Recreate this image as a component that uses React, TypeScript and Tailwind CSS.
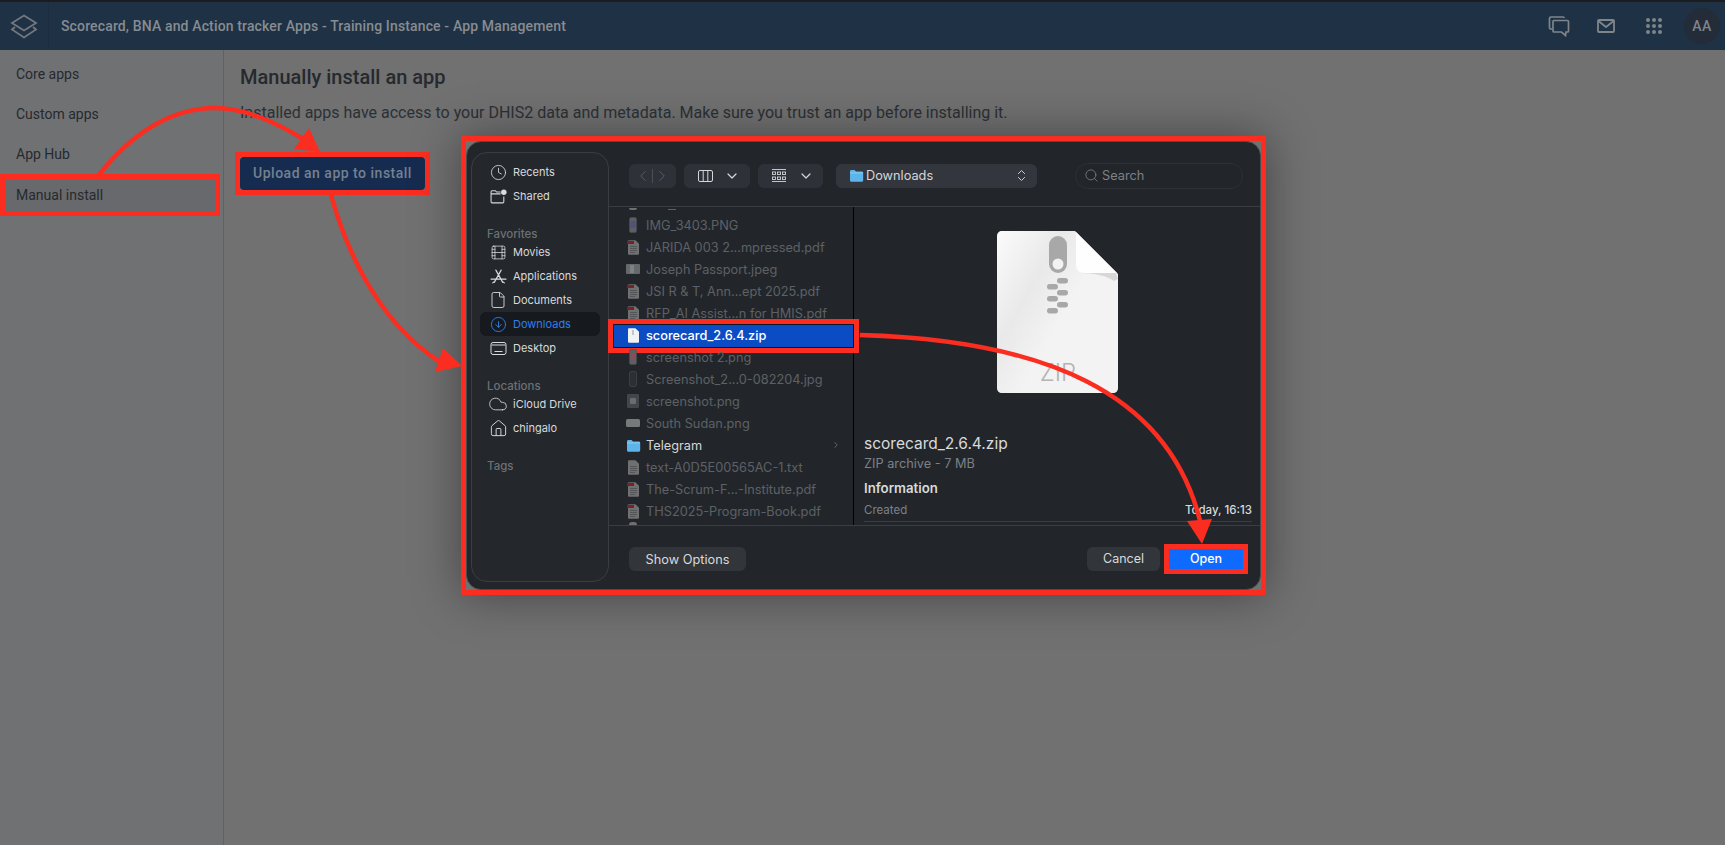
import { ChevronDown, ChevronLeft, ChevronRight, ChevronsUpDown, Cloud, Clock, File, Film, CircleArrowDown, House, Search } from "lucide-react";

type FileKind = "pdf" | "phone" | "phonePink" | "phoneDark" | "passport" | "square" | "wide" | "folder" | "txt" | "zip";

const files: { name: string; kind: FileKind; selected?: boolean; active?: boolean }[] = [
  { name: "IMG_3403.PNG", kind: "phone" },
  { name: "JARIDA 003 2...mpressed.pdf", kind: "pdf" },
  { name: "Joseph Passport.jpeg", kind: "passport" },
  { name: "JSI R & T, Ann...ept 2025.pdf", kind: "pdf" },
  { name: "RFP_AI Assist...n for HMIS.pdf", kind: "pdf" },
  { name: "scorecard_2.6.4.zip", kind: "zip", selected: true },
  { name: "screenshot 2.png", kind: "phonePink" },
  { name: "Screenshot_2...0-082204.jpg", kind: "phoneDark" },
  { name: "screenshot.png", kind: "square" },
  { name: "South Sudan.png", kind: "wide" },
  { name: "Telegram", kind: "folder", active: true },
  { name: "text-A0D5E00565AC-1.txt", kind: "txt" },
  { name: "The-Scrum-F...-Institute.pdf", kind: "pdf" },
  { name: "THS2025-Program-Book.pdf", kind: "pdf" },
];

function FileGlyph({ kind }: { kind: FileKind }) {
  if (kind === "folder") {
    return (
      <svg width="15" height="13" viewBox="0 0 15 13">
        <path d="M1 2.500C1 1.500 1.600 1 2.400 1h3.200l1.400 1.500h5.600c1 0 1.600.6 1.600 1.500v7.200c0 .9-.6 1.500-1.600 1.500H2.400c-.8 0-1.400-.6-1.400-1.500z" fill="#5db4ea" />
        <rect x="1" y="3.400" width="13" height="1" fill="#8ad0f5" />
      </svg>
    );
  }
  if (kind === "phone" || kind === "phonePink" || kind === "phoneDark") {
    const body = kind === "phoneDark" ? "#2c2f33" : "#5d5f63";
    const mid = kind === "phone" ? "#54507a" : kind === "phonePink" ? "#8a4d5c" : "#2c2f33";
    return (
      <svg width="8" height="16" viewBox="0 0 8 16">
        <rect x="0.5" y="0.5" width="7" height="15" rx="1.5" fill={body} stroke="#4a4d51" strokeWidth="0.6" />
        <rect x="1.5" y="4" width="5" height="7" fill={mid} />
      </svg>
    );
  }
  if (kind === "passport") {
    return (
      <svg width="14" height="10" viewBox="0 0 14 10">
        <rect width="14" height="10" rx="1" fill="#66696b" />
        <rect x="4" y="1" width="4" height="8" fill="#7d8180" />
      </svg>
    );
  }
  if (kind === "square") {
    return (
      <svg width="12" height="14" viewBox="0 0 12 14">
        <rect width="12" height="14" rx="1" fill="#43464a" />
        <rect x="3" y="4" width="6" height="6" rx="1" fill="#6a6d70" />
      </svg>
    );
  }
  if (kind === "wide") {
    return (
      <svg width="14" height="8" viewBox="0 0 14 8">
        <rect width="14" height="8" rx="1.5" fill="#77797b" />
      </svg>
    );
  }
  const page = kind === "zip" ? "#f1f2f3" : "#6f7072";
  return (
    <svg width="13" height="15" viewBox="0 0 13 15">
      <path d="M1 1.200C1 .6 1.400.2 2 .2h6.400L12 3.800V14c0 .5-.4.8-1 .8H2c-.6 0-1-.3-1-.8z" fill={page} />
      {kind === "zip" && <rect x="5.5" y="2" width="1" height="5" fill="#9a9a9a" />}
      {(kind === "pdf" || kind === "txt") && (
        <path d="M3 6.500h7M3 8.500h7M3 10.500h7M3 12.500h5" stroke="#4d4e50" strokeWidth="0.8" />
      )}
      {kind === "pdf" && <rect x="0" y="1" width="7" height="3" fill="#742326" />}
    </svg>
  );
}

function SharedIcon() {
  return (
    <svg width="17" height="15" viewBox="0 0 16 14" fill="none" stroke="#d8dadc" strokeWidth="1">
      <path d="M1 12V2.500C1 1.900 1.400 1.500 2 1.500h3l1.200 1.300H10M1 4.500h9M1 12c0 .6.4 1 1 1h10c.6 0 1-.4 1-1V7" />
      <circle cx="13" cy="3" r="2.600" fill="#d8dadc" stroke="none" />
    </svg>
  );
}

function ApplicationsIcon() {
  return (
    <svg width="17" height="17" viewBox="0 0 16 16" fill="none" stroke="#d8dadc" strokeWidth="1.1" strokeLinecap="round">
      <path d="M5.500 2 12 13.500M10.500 2 4 13.500M1 10.500h14M2.500 14l1.500-1M13.500 14 12 13" />
    </svg>
  );
}

function DesktopIcon() {
  return (
    <svg width="17" height="13" viewBox="0 0 16 13" fill="none" stroke="#d8dadc" strokeWidth="1">
      <rect x="0.5" y="0.5" width="15" height="12" rx="2" />
      <path d="M1 3h14M4 9.500h8" />
    </svg>
  );
}

function PlaceRow({ icon, label, active }: { icon: React.ReactNode; label: string; active?: boolean }) {
  return (
    <div className={active ? "mx-2 flex h-6 items-center gap-1 rounded-md bg-[#16191d] px-[7px] text-[#2d7ff0]" : "mx-2 flex h-6 items-center gap-1 px-[7px] text-[#d8dadc]"}>
      <span className="flex w-[22px] justify-center">{icon}</span>
      <span className="font-['Inter',sans-serif] text-[11px]">{label}</span>
    </div>
  );
}

function PlaceLabel({ text }: { text: string }) {
  return <div className="mt-4 h-4 pl-[15px] pt-[2px] font-['Inter',sans-serif] text-[11.5px] font-medium leading-4 text-[#6c7075]">{text}</div>;
}

function FileRow({ file }: { file: (typeof files)[number] }) {
  const color = file.selected ? "text-white" : file.active ? "text-[#d4d6d8]" : "text-[#5d6165]";
  return (
    <div className="relative flex h-[22px] items-center">
      {file.selected && (
        <div className="absolute -left-px -top-[5px] h-[34px] w-[251px] border-[5px] border-[#fb2d20] bg-[#0b4cc4] shadow-[inset_0_0_0_1px_#0c1526]" />
      )}
      <span className="relative flex w-[32px] justify-end">
        <span className="flex w-[16px] justify-center">
          <FileGlyph kind={file.kind} />
        </span>
      </span>
      <span className={`relative ml-[5px] whitespace-nowrap pt-px font-['Inter',sans-serif] text-[12.75px] ${file.selected ? "font-medium" : ""} ${color}`}>{file.name}</span>
      {file.active && <ChevronRight className="absolute left-[222px] text-[#6c7075]" size={10} />}
    </div>
  );
}

function ZipPreview() {
  return (
    <svg width="121" height="162" viewBox="0 0 121 162">
      <defs>
        <linearGradient id="page" x1="0" y1="0" x2="1" y2="0.75">
          <stop offset="0" stopColor="#fbfbfb" />
          <stop offset="0.35" stopColor="#e9e9e9" />
          <stop offset="0.6" stopColor="#f3f3f3" />
        </linearGradient>
      </defs>
      <path d="M0 5C0 2 2 0 5 0h73l43 43v114c0 3-2 5-5 5H5c-3 0-5-2-5-5z" fill="url(#page)" />
      <path d="M79 1l41 41H88c-6 0-9-3-9-9z" fill="#fefefe" />
      <path d="M83 42h36l2 6-4 2c-6-5-20-8-34-8z" fill="#d8d8d8" />
      <rect x="52" y="5" width="18" height="37" rx="9" fill="#a8a8a8" />
      <circle cx="61" cy="33" r="5.500" fill="#f2f2f2" />
      {[
        [60, 47],
        [50, 53],
        [60, 59],
        [50, 65],
        [60, 71],
        [50, 77],
      ].map(([x, y]) => (
        <rect key={y} x={x} y={y} width="11" height="5.500" rx="2.700" fill="#a8a8a8" />
      ))}
      <text x="61" y="150" textAnchor="middle" fontFamily="Inter, sans-serif" fontSize="24" fontWeight="300" fill="#b4b4b4">
        ZIP
      </text>
    </svg>
  );
}

function FinderDialog() {
  return (
    <div className="absolute left-[461px] top-[136px] h-[459px] w-[805px] border-[5px] border-[#fb2d20] shadow-[0_0_45px_rgba(0,0,0,0.4)]">
      <div className="flex h-full rounded-[15px] border border-[#4a4d50] bg-[#22262b]">
        {/* Places sidebar */}
        <div className="mb-[7px] ml-[4px] mt-[10px] w-[138px] rounded-[16px] border border-[#3a3e43] bg-[#24282c] pt-[7px]">
          <PlaceRow label="Recents" icon={<Clock size={17} strokeWidth={1.2} />} />
          <PlaceRow label="Shared" icon={<SharedIcon />} />
          <PlaceLabel text="Favorites" />
          <PlaceRow label="Movies" icon={<Film size={17} strokeWidth={1.1} />} />
          <PlaceRow label="Applications" icon={<ApplicationsIcon />} />
          <PlaceRow label="Documents" icon={<File size={18} strokeWidth={1.2} />} />
          <PlaceRow label="Downloads" active icon={<CircleArrowDown size={17} strokeWidth={1.3} />} />
          <PlaceRow label="Desktop" icon={<DesktopIcon />} />
          <PlaceLabel text="Locations" />
          <PlaceRow label="iCloud Drive" icon={<Cloud size={20} strokeWidth={1} />} />
          <PlaceRow label="chingalo" icon={<House size={19} strokeWidth={1.2} />} />
          <PlaceLabel text="Tags" />
        </div>

        <div className="flex min-w-0 flex-1 flex-col">
          {/* Toolbar */}
          <div className="flex h-[65px] items-center border-b border-[#3a3d41] pl-[20px] pt-[3px]">
            <div className="flex h-6 w-[47px] items-center justify-center rounded-md bg-[#2e3238] text-[#5d6165]">
              <ChevronLeft size={18} strokeWidth={1.2} />
              <span className="h-3.5 w-px bg-[#4a4d52]" />
              <ChevronRight size={18} strokeWidth={1.2} />
            </div>
            <div className="ml-2 flex h-6 w-[66px] items-center justify-between rounded-md bg-[#2e3238] pl-[14px] pr-[10px] text-[#d4d6d8]">
              <svg width="15" height="12" viewBox="0 0 15 12" fill="none" stroke="currentColor" strokeWidth="1">
                <rect x="0.5" y="0.5" width="14" height="11" rx="1.5" />
                <path d="M5.200 0.5v11M9.800 0.5v11" />
              </svg>
              <ChevronDown size={16} strokeWidth={1.8} />
            </div>
            <div className="ml-2 flex h-6 w-[65px] items-center justify-between rounded-md bg-[#2e3238] pl-[14px] pr-[9px] text-[#d4d6d8]">
              <svg width="14" height="13" viewBox="0 0 14 13" fill="none" stroke="currentColor" strokeWidth="0.9">
                <path d="M0 0.5h14M0 12.500h14" />
                <rect x="0.5" y="3" width="3" height="2.500" />
                <rect x="5.500" y="3" width="3" height="2.500" />
                <rect x="10.500" y="3" width="3" height="2.500" />
                <rect x="0.5" y="8" width="3" height="2.500" />
                <rect x="5.500" y="8" width="3" height="2.500" />
                <rect x="10.500" y="8" width="3" height="2.500" />
              </svg>
              <ChevronDown size={16} strokeWidth={1.8} />
            </div>
            <div className="ml-[13px] flex h-6 w-[201px] items-center rounded-md bg-[#33373d] pl-[13px] pr-[8px] text-[#d4d6d8]">
              <FileGlyph kind="folder" />
              <span className="ml-[2px] font-['Inter',sans-serif] text-[12.75px]">Downloads</span>
              <ChevronsUpDown className="ml-auto" size={15} strokeWidth={1.5} />
            </div>
            <div className="ml-[38px] flex h-[26px] w-[168px] items-center gap-[3px] rounded-[13px] border border-[#2d3136] pl-2 text-[#7d8185]">
              <Search size={15} strokeWidth={1.3} />
              <span className="font-['Inter',sans-serif] text-[12.75px]">Search</span>
            </div>
          </div>

          {/* File list and preview */}
          <div className="flex h-[318px]">
            <div className="w-[245px] shrink-0 border-r border-black">
              {/* Row scrolled almost out of view: only its lowest pixels show */}
              <div className="flex h-[7px] items-start pl-[20px] pt-px">
                <span className="h-[2px] w-[8px] rounded-b-sm bg-[#6f7072]" />
                <span className="ml-[31px] mt-px h-px w-[8px] bg-[#5d6165]" />
              </div>
              {files.map((file) => (
                <FileRow key={file.name} file={file} />
              ))}
              <div className="ml-[20px] h-[3px] w-[8px] rounded-t-sm bg-[#6f7072]" />
            </div>
            <div className="flex min-w-0 flex-1 flex-col pl-[10px] pr-[8px] pt-[24px]">
              <div className="flex justify-center pr-[2px]">
                <ZipPreview />
              </div>
              <div className="mt-[41px] font-['Inter',sans-serif] text-[15.5px] leading-5 text-[#d8dadc]">scorecard_2.6.4.zip</div>
              <div className="font-['Inter',sans-serif] text-[12.75px] leading-5 text-[#7d8185]">ZIP archive - 7 MB</div>
              <div className="mt-1 font-['Inter',sans-serif] text-[13.25px] font-semibold leading-5 text-[#d8dadc]">Information</div>
              <div className="mt-[4px] flex h-4 items-center justify-between font-['Inter',sans-serif] text-[11.5px] leading-4">
                <span className="text-[#7d8185]">Created</span>
                <span className="font-medium text-[#d8dadc]">Today, 16:13</span>
              </div>
              <div className="mt-[3px] h-px bg-[#3a3d41]" />
            </div>
          </div>

          {/* Footer */}
          <div className="flex flex-1 items-start justify-between border-t border-[#3a3d41] pl-[20px] pr-[12px] pt-[18px]">
            <div className="mt-[3px] flex h-6 w-[117px] items-center justify-center rounded-md bg-[#32363b] pt-px font-['Inter',sans-serif] text-[12.75px] text-[#d8dadc]">
              Show Options
            </div>
            <div className="flex items-start gap-1">
              <div className="mt-[3px] flex h-6 w-[73px] items-center justify-center rounded-md bg-[#32363b] pt-px font-['Inter',sans-serif] text-[12.5px] text-[#d8dadc]">
                Cancel
              </div>
              <div className="flex h-[30px] w-[84px] items-center justify-center border-[5px] border-[#fb2d20] bg-[#0f6bff] pt-px font-['Inter',sans-serif] text-[12.5px] font-medium text-white">
                Open
              </div>
            </div>
          </div>
        </div>
      </div>
    </div>
  );
}

function Arrows() {
  return (
    <svg className="pointer-events-none absolute left-0 top-0" width="1725" height="845" viewBox="0 0 1725 845" fill="none">
      <g stroke="#fb2d20" strokeWidth="4.5">
        <path d="M98 176C130 135 170 108 215 108C245 108 275 122 305 140" />
        <path d="M331 195C345 245 375 320 440 362" />
        <path d="M860 335C1040 340 1170 390 1201 525" />
      </g>
      <g fill="#fb2d20">
        <polygon points="320,152 309,128 294,149" />
        <polygon points="462,366 443,348 435,372" />
        <polygon points="1202,544 1187,521 1212,519" />
      </g>
    </svg>
  );
}

export default function App() {
  return (
    <div className="relative flex h-screen w-full flex-col overflow-hidden bg-[#707170] font-['Roboto',sans-serif]">
      {/* Top bar */}
      <header className="flex h-[50px] shrink-0 items-center border-t-2 border-[#1c1d20] bg-[#1f3145] text-[#7f858a]">
        <div className="flex h-full w-[49px] items-center justify-center border-r border-[#1c2d40] text-[#72787d]">
          <svg width="28" height="25" viewBox="0 0 28 25" fill="none" stroke="currentColor" strokeWidth="1.8">
            <path d="M14 1.500 26 9 14 16.500 2 9z" />
            <path d="M5 13 2 15.500 14 23.500 26 15.500 23 13" />
          </svg>
        </div>
        <span className="ml-3 text-sm font-medium tracking-[0.14px] text-[#868c91]">Scorecard, BNA and Action tracker Apps - Training Instance - App Management</span>
        <div className="ml-auto flex items-center">
          <svg width="22" height="22" viewBox="0 0 22 22" fill="none" stroke="currentColor" strokeWidth="1.7">
            <path d="M4 14H3a1.500 1.500 0 0 1-1.500-1.500v-9A1.500 1.500 0 0 1 3 2h12a1.500 1.500 0 0 1 1.400 1" />
            <path d="M6 5.500h13.500a1 1 0 0 1 1 1V16a1 1 0 0 1-1 1H18l-.500 3.500-4-3.500H6a1 1 0 0 1-1-1V6.500a1 1 0 0 1 1-1z" />
          </svg>
          <svg className="ml-[27px]" width="18" height="14" viewBox="0 0 18 14" fill="none" stroke="currentColor" strokeWidth="1.8">
            <rect x="1" y="1" width="16" height="12" rx="1" />
            <path d="M1.500 2 9 8l7.500-6" />
          </svg>
          <svg className="ml-[31px]" width="16" height="16" viewBox="0 0 16 16" fill="currentColor">
            {[2, 8, 14].flatMap((y) => [2, 8, 14].map((x) => <circle key={`${x}-${y}`} cx={x} cy={y} r="2" />))}
          </svg>
          <div className="ml-[22px] mr-[5px] flex h-9 w-9 items-center justify-center rounded-full bg-[#232c38] text-sm font-medium tracking-wide">AA</div>
        </div>
      </header>

      <div className="flex min-h-0 flex-1">
        {/* App sections */}
        <nav className="w-[224px] shrink-0 border-r border-[#5f6163] bg-[#707173] pt-1 text-sm text-[#26292e]">
          <div className="flex h-10 items-center pl-4">Core apps</div>
          <div className="flex h-10 items-center pl-4">Custom apps</div>
          <div className="flex h-10 items-center pl-4">App Hub</div>
          <div className="flex h-[42px] w-[220px] items-center border-[5px] border-[#fb2d20] bg-[#68696c] pb-px pl-[11px]">Manual install</div>
        </nav>

        <main className="pl-4 pt-[13px] text-[#26292e]">
          <h1 className="text-xl font-medium leading-7">Manually install an app</h1>
          <p className="mt-[11px] text-base leading-[22px] text-[#2c3036]">
            Installed apps have access to your DHIS2 data and metadata. Make sure you trust an app before installing it.
          </p>
          <div className="-ml-[5px] mt-7 h-[43px] w-[195px] border-[5px] border-[#fb2d20]">
            <div className="flex h-full items-center justify-center rounded-sm bg-[#152c50] pb-px text-sm font-medium tracking-[0.5px] text-[#76808f]">Upload an app to install</div>
          </div>
        </main>
      </div>

      <FinderDialog />
      <Arrows />
    </div>
  );
}
